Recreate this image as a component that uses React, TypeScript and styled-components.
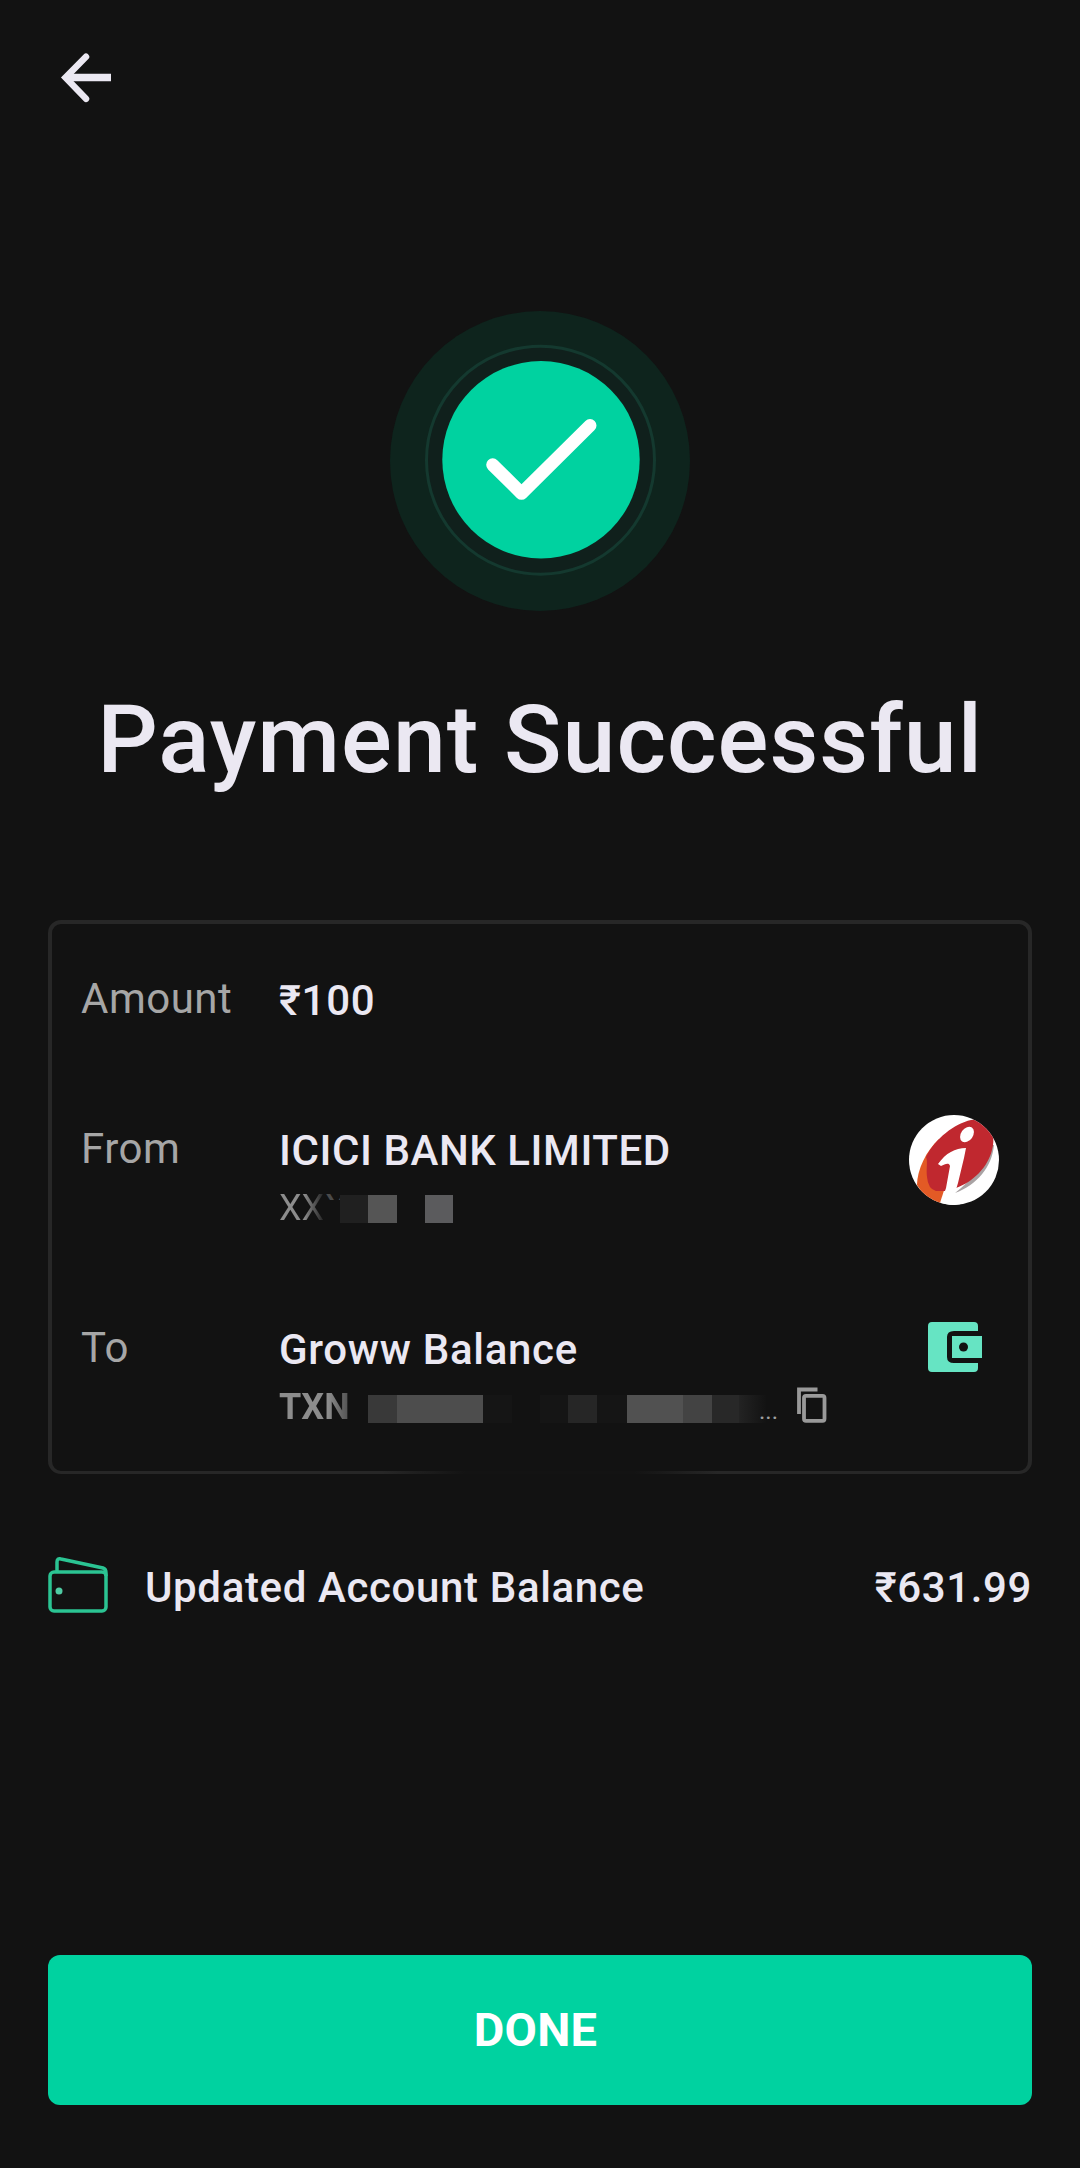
import React from "react";
import styled, { createGlobalStyle } from "styled-components";

const GlobalStyle = createGlobalStyle`
  * { box-sizing: border-box; }
  body {
    margin: 0;
    background: #121212;
    font-family: Roboto, "Noto Sans", sans-serif;
  }
`;

const Screen = styled.main`
  display: flex;
  flex-direction: column;
  width: 1080px;
  height: 2168px;
  padding: 0 48px 63px;
  background: #121212;
  color: #ebe8f2;
`;

const Header = styled.header`
  display: flex;
  height: 311px;
  padding: 48px 0 0 8px;
`;

const BackButton = styled.button`
  width: 60px;
  height: 60px;
  padding: 0;
  border: 0;
  background: none;
`;

const Hero = styled.section`
  display: flex;
  flex-direction: column;
  align-items: center;
  height: 609px;
`;

const Title = styled.h1`
  margin: 69px 0 0;
  font-size: 95px;
  line-height: 120px;
  font-weight: 500;
  letter-spacing: 1px;
  white-space: nowrap;
`;

const Card = styled.section`
  position: relative;
  display: flex;
  flex-direction: column;
  height: 554px;
  padding: 47px 29px 0;
  border: 4px solid #272727;
  border-bottom-width: 3px;
  border-radius: 13px;
`;

const BorderFade = styled.div`
  position: absolute;
  left: 330px;
  right: 310px;
  bottom: -3px;
  height: 3px;
  background: linear-gradient(90deg, transparent, #131313 25%, #131313 75%, transparent);
`;

const Row = styled.div<{ $gap: number }>`
  display: grid;
  grid-template-columns: 198px 1fr auto;
  align-items: start;
  margin-bottom: ${(p) => p.$gap}px;
`;

const Label = styled.span`
  font-size: 42px;
  line-height: 56px;
  letter-spacing: 0.5px;
  color: #a6a6a6;
`;

const Details = styled.div`
  display: flex;
  flex-direction: column;
  gap: 4px;
  padding-top: 2px;
`;

const Value = styled.span<{ $spacing?: number }>`
  font-size: 42px;
  line-height: 56px;
  font-weight: 500;
  letter-spacing: ${(p) => p.$spacing ?? 0.7}px;
  white-space: nowrap;
`;

const SubLine = styled.div`
  display: flex;
  height: 50px;
  line-height: 50px;
  font-size: 36px;
  white-space: nowrap;
`;

const FadingText = styled.span<{ $width: number; $solid: number; $weight?: number }>`
  width: ${(p) => p.$width}px;
  font-weight: ${(p) => p.$weight ?? 400};
  color: transparent;
  background: linear-gradient(90deg, #8c8c8c ${(p) => p.$solid}%, #1c1c1c 100%);
  background-clip: text;
  -webkit-background-clip: text;
`;

const ClippedText = styled.span`
  width: 15px;
  color: #4a4a4a;
  clip-path: inset(0 0 33px 0);
`;

const Mosaic = styled.div<{ $top: number }>`
  display: flex;
  height: 28px;
  margin-top: ${(p) => p.$top}px;
`;

const Tile = styled.span<{ $width: number; $color: string; $fade?: boolean }>`
  width: ${(p) => p.$width}px;
  height: 28px;
  background: ${(p) => (p.$fade ? `linear-gradient(90deg, ${p.$color}, #121212)` : p.$color)};
`;

const Ellipsis = styled.span`
  margin-left: -8px;
  width: 38px;
  font-size: 24px;
  line-height: 58px;
  color: #a0a0a0;
`;

const CopyIcon = styled.svg`
  margin-top: 5px;
`;

const BankLogo = styled.svg`
  margin: -6px 0 -20px 0;
`;

const WalletIcon = styled.svg`
  margin: 2px 17px 0 0;
`;

const Balance = styled.section`
  display: flex;
  align-items: center;
  height: 56px;
  margin-top: 86px;
`;

const BalanceLabel = styled.span`
  flex: 1;
  margin-left: 35px;
  font-size: 42px;
  line-height: 56px;
  font-weight: 500;
  letter-spacing: 0.63px;
`;

const OutlineWallet = styled.svg`
  margin-top: -6px;
`;

const DoneButton = styled.button`
  width: 984px;
  height: 150px;
  margin-top: auto;
  padding: 0 9px 0 0;
  border: 0;
  border-radius: 12px;
  background: #00d2a0;
  color: #ffffff;
  font: 700 47px/60px Roboto, "Noto Sans", sans-serif;
  letter-spacing: 0.2px;
`;

type TileData = { width: number; color: string; fade?: boolean };

const accountTiles: TileData[] = [
  { width: 28, color: "#202020" },
  { width: 29, color: "#555555" },
  { width: 28, color: "#121212" },
  { width: 28, color: "#5b5b5d" },
];

const transactionTiles: TileData[] = [
  { width: 29, color: "#393939" },
  { width: 86, color: "#4d4d4d" },
  { width: 29, color: "#151515" },
  { width: 28, color: "#121212" },
  { width: 28, color: "#151515" },
  { width: 29, color: "#262626" },
  { width: 30, color: "#151515" },
  { width: 56, color: "#515151" },
  { width: 29, color: "#434343" },
  { width: 27, color: "#282828" },
  { width: 28, color: "#232323", fade: true },
];

const Tiles = ({ items, top }: { items: TileData[]; top: number }) => (
  <Mosaic $top={top}>
    {items.map((t, i) => (
      <Tile key={i} $width={t.width} $color={t.color} $fade={t.fade} />
    ))}
  </Mosaic>
);

export default function App() {
  return (
    <>
      <GlobalStyle />
      <Screen>
        <Header>
          <BackButton aria-label="Back">
            <svg width="60" height="60" fill="none" stroke="#ebe8f2">
              <path d="M55 29.6H11" strokeWidth="7.5" />
              <path d="M30 8.8L9.5 29.6l20.5 21.2" strokeWidth="6.5" strokeLinecap="round" />
            </svg>
          </BackButton>
        </Header>

        <Hero>
          <svg width="300" height="300" fill="none">
            <circle cx="150" cy="150" r="150" fill="#0e241d" />
            <circle cx="150.5" cy="149.2" r="114" fill="#10201c" stroke="#14392f" strokeWidth="3" />
            <circle cx="151" cy="148.7" r="98.7" fill="#00d2a0" />
            <path
              d="M102.7 153.8L131.5 182.3L200 114.5"
              stroke="#fff"
              strokeWidth="13"
              strokeLinecap="round"
              strokeLinejoin="round"
            />
          </svg>
          <Title>Payment Successful</Title>
        </Hero>

        <Card>
          <Row $gap={92}>
            <Label>Amount</Label>
            <Details>
              <Value>₹100</Value>
            </Details>
          </Row>
          <Row $gap={87}>
            <Label>From</Label>
            <Details>
              <Value $spacing={0.57}>ICICI BANK LIMITED</Value>
              <SubLine>
                <FadingText $width={46} $solid={55}>XX</FadingText>
                <ClippedText>X</ClippedText>
                <Tiles items={accountTiles} top={12} />
              </SubLine>
            </Details>
            <BankLogo width="90" height="90" viewBox="0 0 90 90">
              <defs>
                <clipPath id="disc">
                  <circle cx="45" cy="45" r="45" />
                </clipPath>
              </defs>
              <circle cx="45" cy="45" r="45" fill="#fff" />
              <g clipPath="url(#disc)">
                <path d="M85 30C83 52 68 70 46 78C62 66 74 50 80 30Z" fill="#a9a3a4" />
                <path d="M30 24C17 36 8 55 8 70L17 84L30 91L40 60Z" fill="#e35a25" />
                <path
                  d="M62 5C45 9 27 23 17 42C19 46 17 54 18 62Q19 74 27 76L36 76L47 73C64 67 79 52 83 35C86 24 84 14 77 9Q71 3 62 5Z"
                  fill="#c0282f"
                />
                <ellipse cx="58" cy="19.5" rx="6" ry="8.5" transform="rotate(35 58 19.5)" fill="#fff" />
                <path
                  d="M29 49C37 38 46 33 57 33L55 43L49 68L46 78L52 91L31 91L37 73L41 51C40 47 36 49 32 51Z"
                  fill="#fff"
                />
              </g>
            </BankLogo>
          </Row>
          <Row $gap={0}>
            <Label>To</Label>
            <Details>
              <Value>Groww Balance</Value>
              <SubLine>
                <FadingText $width={89} $solid={55} $weight={700}>TXN</FadingText>
                <Tiles items={transactionTiles} top={13} />
                <Ellipsis>...</Ellipsis>
                <CopyIcon width="30" height="36" fill="none" stroke="#999" strokeWidth="3.8">
                  <path d="M20.5 2.5H2V27" />
                  <rect x="7" y="8.8" width="20.5" height="25" rx="2" />
                </CopyIcon>
              </SubLine>
            </Details>
            <WalletIcon width="54" height="50">
              <path
                d="M4 0H46Q50 0 50 4V9H26Q19 9 19 15V35Q19 41 26 41H50V46Q50 50 46 50H4Q0 50 0 46V4Q0 0 4 0Z"
                fill="#66e4c3"
              />
              <path d="M24 14H54V36H24Z" fill="#66e4c3" />
              <circle cx="35.5" cy="25" r="4.5" fill="#121212" />
            </WalletIcon>
          </Row>
          <BorderFade />
        </Card>

        <Balance>
          <OutlineWallet width="62" height="58" fill="none" stroke="#2bc493" strokeWidth="3.5" strokeLinejoin="round">
            <rect x="2" y="16" width="56" height="39" rx="4" />
            <path d="M9 16V6Q9 2 13 3L55 12Q58 13 58 17V20" />
            <circle cx="11" cy="35" r="3.5" fill="#4fcba3" stroke="none" />
          </OutlineWallet>
          <BalanceLabel>Updated Account Balance</BalanceLabel>
          <Value $spacing={0.6}>₹631.99</Value>
        </Balance>

        <DoneButton>DONE</DoneButton>
      </Screen>
    </>
  );
}
